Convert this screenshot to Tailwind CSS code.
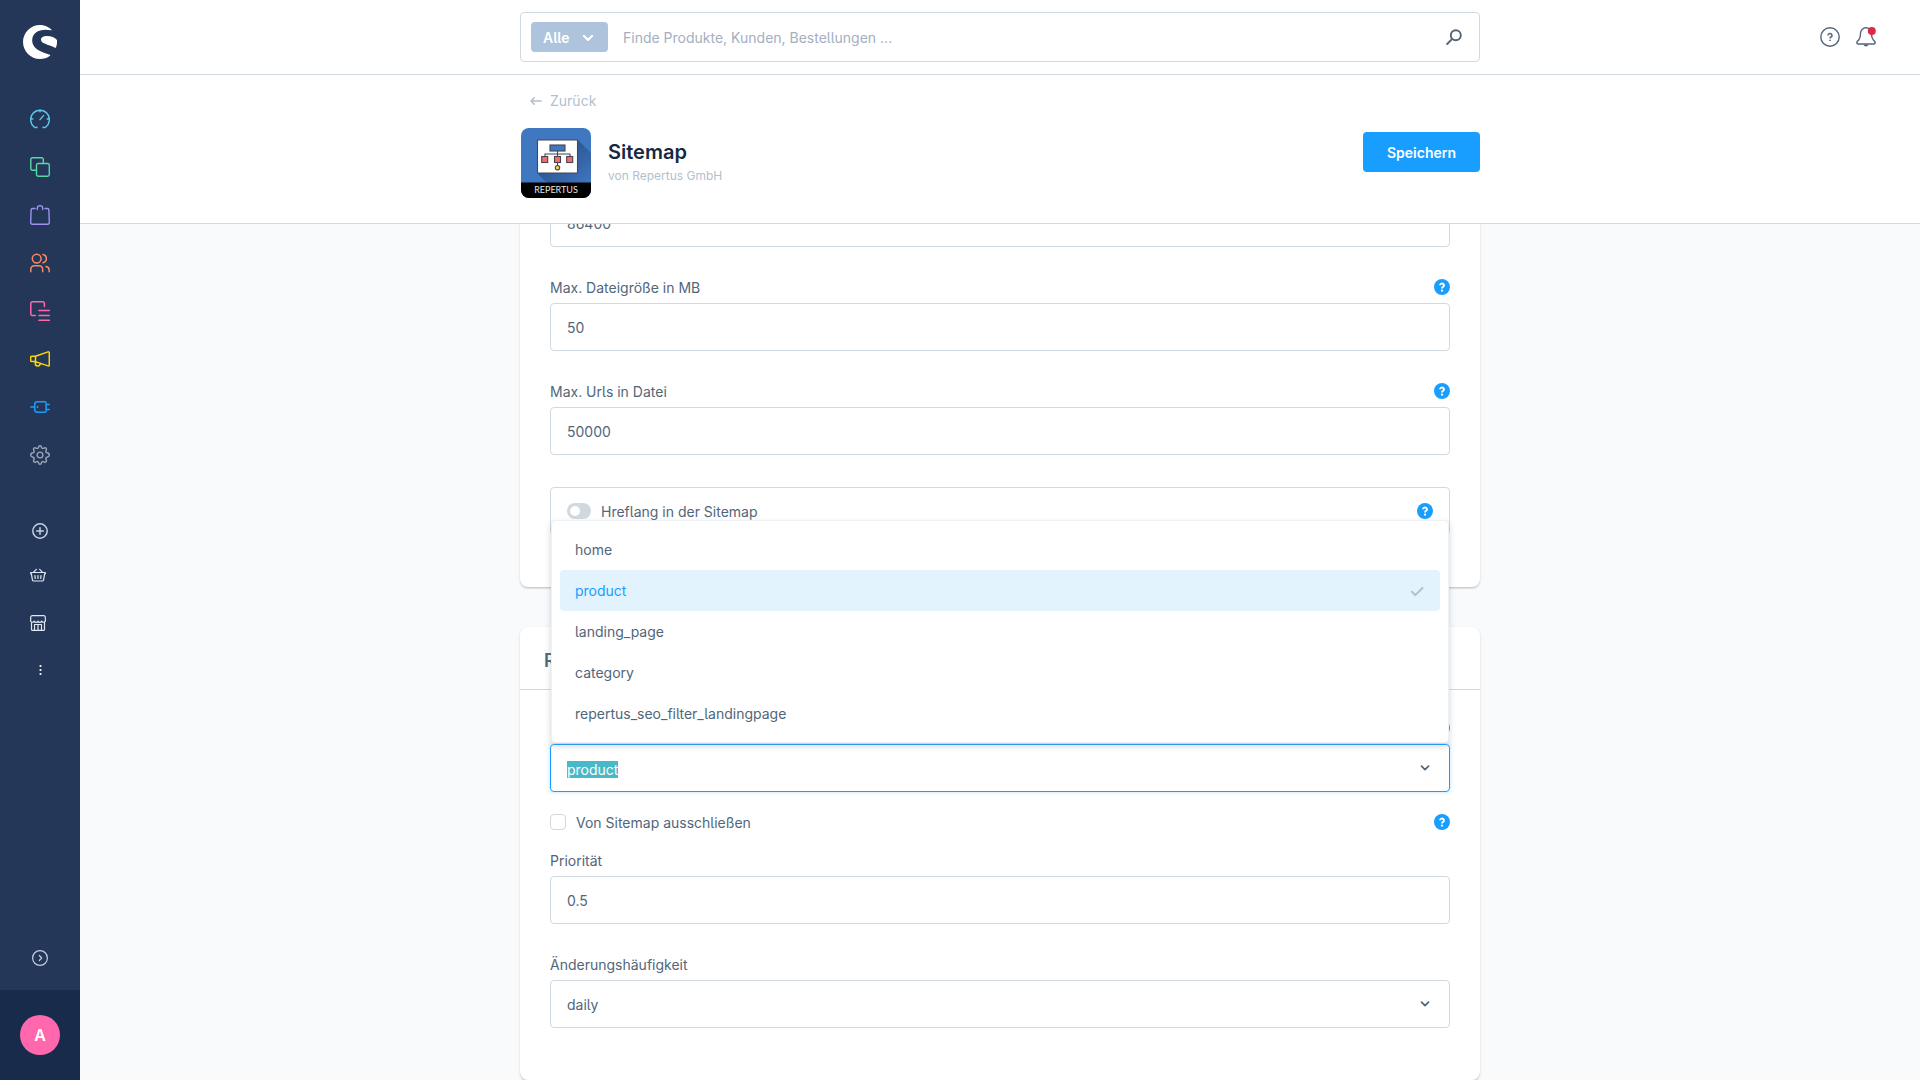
<!DOCTYPE html>
<html lang="de">
<head>
<meta charset="utf-8">
<meta name="viewport" content="width=device-width, initial-scale=1">
<title>Sitemap | Shopware Administration</title>
<script src="https://cdn.jsdelivr.net/npm/@tailwindcss/browser@4"></script>
</head>
<body class="flex h-screen overflow-hidden bg-[#f9fafb] font-['Inter',sans-serif] text-sm text-[#52667a] [font-feature-settings:'cv05']">

<svg class="hidden" aria-hidden="true">
  <symbol id="help" viewBox="0 0 16 16">
    <circle cx="8" cy="8" r="8" fill="#189eff"/>
    <path d="M6 6.300a2 1.800 0 1 1 3 1.600c-.7.400-1 .7-1 1.500" fill="none" stroke="#fff" stroke-width="1.900"/>
    <circle cx="8" cy="11.700" r="1.100" fill="#fff"/>
  </symbol>
  <symbol id="chevron" viewBox="0 0 10 10">
    <path d="M1.500 3.200 5 6.700l3.500-3.500" fill="none" stroke="currentColor" stroke-width="1.700" stroke-linecap="round" stroke-linejoin="round"/>
  </symbol>
</svg>

<!-- Main navigation -->
<aside class="flex w-20 shrink-0 flex-col items-center bg-[#243758]">
  <a href="#" aria-label="Shopware" class="mt-[25px]">
    <svg class="size-[34px]" viewBox="0 0 34 34" fill="#fff">
      <path d="M28.600 4.700C25.500 1.600 21.300 0 17 0 7.600 0 0 7.600 0 17s7.600 17 17 17c3.700 0 7.200-1.200 10-3.300.4-.3.300-.7-.2-.9C19.500 27 9.200 24.600 9.200 15.200 9.200 8.500 15 4.700 22.500 4.700c2 0 3.800.2 5.800.6.5 0 .6-.3.300-.6z"/>
      <path d="M34 14.900c-2.300-2.100-5.700-3.800-10-3.800-3.500 0-6 1.300-6 3.600 0 3.900 6.800 4.300 14.100 8.100.5.2.8.1.9-.3.9-2.300 1.200-5 1-7.600z"/>
    </svg>
  </a>
  <nav class="mt-[50px] flex flex-col gap-7 [&_svg]:size-5" aria-label="Hauptmenü">
    <a href="#" aria-label="Dashboard"><svg viewBox="0 0 20 20" fill="none" stroke="#5cc9e8" stroke-width="1.400" stroke-linecap="round"><path d="M7 18.200c-.9.600-2 .5-2.800-.2a9.400 9.400 0 1 1 11.600 0c-.8.700-1.900.8-2.800.2M10 .8v2M.8 10h2M17.200 10h2M10 10.600l3.500-4"/></svg></a>
    <a href="#" aria-label="Kataloge"><svg viewBox="0 0 20 20" fill="none" stroke="#57d9a3" stroke-width="1.400"><path d="M6 13.300H2.500A1.700 1.700 0 0 1 .8 11.600V2.500A1.700 1.700 0 0 1 2.500.8h9.100a1.700 1.700 0 0 1 1.700 1.700V6"/><rect x="6.500" y="6.500" width="12.800" height="12.800" rx="1.700"/></svg></a>
    <a href="#" aria-label="Bestellungen"><svg viewBox="0 0 20 20" fill="none" stroke="#a092f0" stroke-width="1.400" stroke-linecap="round" stroke-linejoin="round"><path d="M5 3.500H2.600a1.500 1.500 0 0 0-1.500 1.400L.7 17.700a1.500 1.500 0 0 0 1.500 1.600h15.600a1.500 1.500 0 0 0 1.500-1.600l-.4-12.800a1.500 1.500 0 0 0-1.500-1.400H15M7.300 4.500v-1.200a2.700 2.700 0 0 1 5.400 0v1.200"/></svg></a>
    <a href="#" aria-label="Kunden"><svg viewBox="0 0 20 20" fill="none" stroke="#f88962" stroke-width="1.500" stroke-linecap="round"><circle cx="6.700" cy="5.600" r="4.400"/><path d="M.8 18.800v-2.500a3.500 3.500 0 0 1 3.500-3.500H9.200a3.500 3.500 0 0 1 3.500 3.500v2.500M13 1.400a4.300 4.300 0 0 1 0 8.400M16 13.400a3.700 3.700 0 0 1 3.200 3.700v1.700"/></svg></a>
    <a href="#" aria-label="Inhalte"><svg viewBox="0 0 20 20" fill="none" stroke="#ff68ac" stroke-width="1.500" stroke-linecap="round"><path d="M5.300 14.600H2.500a1.700 1.700 0 0 1-1.700-1.700V2.500A1.700 1.700 0 0 1 2.500.8h10.200a1.700 1.700 0 0 1 1.700 1.700V5.500M9 9.400h10.300M9 14.600h10.300M9 19.300h10.300"/></svg></a>
    <a href="#" aria-label="Marketing"><svg viewBox="0 0 20 20" fill="none" stroke="#ffd700" stroke-width="1.500" stroke-linejoin="round"><path d="M5.500 7.200H1.600a.9.900 0 0 0-.9.900v3.600c0 .5.400.9.900.9h3.900M5.500 7.200v5.400L18 16.900a1 1 0 0 0 1.300-.9V3.800a1 1 0 0 0-1.300-.9zM5.300 12.800v1.500a2.400 2.400 0 0 0 4.800.4"/></svg></a>
    <a href="#" aria-label="Erweiterungen"><svg viewBox="0 0 20 20" fill="none" stroke="#189eff" stroke-width="1.500" stroke-linecap="round"><path d="M.7 10H4.700M16.500 7.500h2.800M16.500 12.500h2.800M7.500 9.500v1"/><path d="M7.500 4.700h7.300a1.300 1.300 0 0 1 1.300 1.300v8a1.300 1.300 0 0 1-1.300 1.300H7.500A2.800 2.800 0 0 1 4.700 12.500v-5A2.800 2.800 0 0 1 7.500 4.700z"/></svg></a>
    <a href="#" aria-label="Einstellungen"><svg viewBox="0 0 20 20" fill="none" stroke="#9aa8b5" stroke-width="1.400" stroke-linejoin="round"><circle cx="10" cy="10" r="2.900"/><path d="M8.500 2.300C8.700 1.200 9.100.7 10 .7s1.300.5 1.500 1.600c.3 1.200 1.300 1.600 2.300.9.900-.6 1.600-.7 2.300 0s.6 1.400 0 2.300c-.7 1-.3 2 .9 2.300 1.700.3 2.300 1 2.300 2.200s-.6 1.800-2.300 2.200c-1.200.3-1.600 1.300-.9 2.300.6.9.7 1.600 0 2.300s-1.400.6-2.300 0c-1-.7-2-.3-2.300.9-.2 1.100-.6 1.600-1.500 1.600s-1.300-.5-1.500-1.600c-.3-1.200-1.300-1.600-2.300-.9-.9.600-1.600.7-2.300 0s-.6-1.400 0-2.300c.7-1 .3-2-.9-2.300C1.300 11.800.7 11.200.7 10s.6-1.900 2.300-2.200c1.200-.3 1.600-1.300.9-2.300-.6-.9-.7-1.600 0-2.300s1.400-.6 2.300 0c1 .7 2 .3 2.300-.9z"/></svg></a>
  </nav>
  <div class="mt-[58px] flex flex-col gap-8 [&_svg]:size-4">
    <button type="button" aria-label="Verkaufskanal hinzufügen"><svg viewBox="0 0 16 16" fill="none" stroke="#c0d1e6" stroke-width="1.500" stroke-linecap="round"><circle cx="8" cy="8" r="7.200"/><path d="M8 4.700v6.600M4.700 8h6.600"/></svg></button>
    <a href="#" aria-label="Storefront" class="-mt-1 -ml-0.5"><svg viewBox="0 0 16 16" fill="none" stroke="#e2e8ef" stroke-width="1.200" stroke-linecap="round" stroke-linejoin="round"><path d="M.7 5.500h14.600v1.300h-.7l-1 6a1.500 1.500 0 0 1-1.500 1.200H3.900a1.500 1.500 0 0 1-1.500-1.200l-1-6H.7zM3.500 5.300l2.800-3M12.500 5.300l-2.800-3M5 8.500l.2 3M8 8.500v3M11 8.500l-.2 3"/></svg></a>
    <a href="#" aria-label="Marktplatz" class="-ml-0.5"><svg viewBox="0 0 16 16" fill="none" stroke="#e2e8ef" stroke-width="1.200" stroke-linecap="round" stroke-linejoin="round"><path d="M1.500 7v7.500a.8.800 0 0 0 .8.800h11.400a.8.800 0 0 0 .8-.8V7M2.200.7h11.600a1.500 1.500 0 0 1 1.500 1.500v2.500A1.900 1.900 0 0 1 11.700 6 1.900 1.900 0 0 1 8 6 1.900 1.900 0 0 1 4.300 6 1.900 1.900 0 0 1 .7 4.700V2.200A1.500 1.500 0 0 1 2.200.7zM4.500 15V9.500h7V15M8 9.500V15"/></svg></a>
    <button type="button" aria-label="Mehr"><svg viewBox="0 0 16 16" fill="#fff"><circle cx="8.500" cy="3" r="1.100"/><circle cx="8.500" cy="7" r="1.100"/><circle cx="8.500" cy="11" r="1.100"/></svg></button>
  </div>
  <button type="button" aria-label="Menü ausklappen" class="mt-auto mb-6"><svg class="size-4" viewBox="0 0 16 16" fill="none" stroke="#c0d1e6" stroke-width="1.200" stroke-linecap="round" stroke-linejoin="round"><circle cx="8" cy="8" r="7.400"/><path d="M7.300 5.500 9.700 8l-2.400 2.500"/></svg></button>
  <div class="flex h-[90px] w-full items-center justify-center bg-[#182b4b]">
    <button type="button" class="size-10 rounded-full bg-[#ff68ac] text-base font-semibold text-white">A</button>
  </div>
</aside>

<div class="flex min-w-0 flex-1 flex-col">
  <!-- Search bar -->
  <header class="grid h-[75px] shrink-0 grid-cols-[1fr_minmax(0,960px)_1fr] items-center border-b border-[#d1d9e0] bg-white">
    <div class="col-start-2 flex h-[50px] items-center rounded border border-[#d1d9e0] pr-[17px] pl-[10px]">
      <button type="button" class="flex h-[30px] w-[77px] items-center justify-between rounded bg-[#aec4dc] pt-0.5 pr-[14px] pl-3 font-semibold text-white">Alle<svg class="size-3"><use href="#chevron"/></svg></button>
      <input type="search" aria-label="Suche" placeholder="Finde Produkte, Kunden, Bestellungen ..." class="ml-[15px] min-w-0 flex-1 pt-0.5 outline-none placeholder:text-[#a3b0bf]">
      <svg class="size-4" viewBox="0 0 16 16" fill="none" stroke="#52667a" stroke-width="1.900" stroke-linecap="round"><circle cx="9.800" cy="6.200" r="5"/><path d="M6.200 9.900 1.200 15"/></svg>
    </div>
    <div class="flex justify-end gap-4 pr-11">
      <button type="button" aria-label="Hilfe"><svg class="size-5" viewBox="0 0 20 20" fill="none" stroke="#52667a" stroke-width="1.400"><circle cx="10" cy="10" r="9.200"/><path d="M8 8.400a2 1.900 0 1 1 3 1.600c-.7.400-1 .8-1 1.500" stroke-width="1.600"/><path d="M10 12.700v1.300" stroke-width="1.600"/></svg></button>
      <button type="button" aria-label="Benachrichtigungen"><svg class="size-5" viewBox="0 0 20 20" fill="none" stroke="#52667a" stroke-width="1.400" stroke-linejoin="round"><path d="M10 .8a5.500 5.500 0 0 0-5.500 5.500c0 4-.9 6.200-2.900 7.800-1.200 1-1 2.900.5 2.900h15.800c1.500 0 1.700-1.900.5-2.900-2-1.600-2.900-3.800-2.900-7.800A5.500 5.500 0 0 0 10 .8z"/><path d="M8.300 17.500a1.800 1.800 0 0 0 3.400 0" stroke-width="1.700"/><circle cx="15.800" cy="4" r="4" fill="#de294c" stroke="none"/></svg></button>
    </div>
  </header>

  <!-- Page header -->
  <div class="shrink-0 border-b border-[#d1d9e0] bg-white">
    <div class="mx-auto h-[148px] max-w-[960px] pt-4">
      <a href="#" class="ml-[10px] inline-flex h-5 items-center gap-2 text-[#b3bfcc]"><svg class="size-3" viewBox="0 0 12 12" fill="none" stroke="currentColor" stroke-width="1.500" stroke-linecap="round" stroke-linejoin="round"><path d="M11.200 6H1M4.300 2.700 1 6l3.300 3.300"/></svg>Zurück</a>
      <div class="mt-4 flex items-center">
        <svg class="ml-px size-[70px] rounded-lg" viewBox="0 0 70 70">
          <defs><linearGradient id="shade" x1="0" y1="0" x2="1" y2="1"><stop offset=".35" stop-color="#2c5592"/><stop offset="1" stop-color="#3f77c1"/></linearGradient></defs>
          <rect width="70" height="70" fill="#3f77c1"/>
          <path d="M57 12 70 25V55H26L16 45z" fill="url(#shade)"/>
          <rect x="16.500" y="12" width="40" height="33" rx=".8" fill="#fff" stroke="#45474d" stroke-width="1.100"/>
          <g stroke="#45474d" stroke-width="1.100"><path d="M36.500 23v15M24 28.500V26h25v2.500" fill="none"/><rect x="29" y="17" width="15" height="6" fill="#3f77c1"/><g fill="#f76b6b"><rect x="20.700" y="28.500" width="6" height="6"/><rect x="33.500" y="28.500" width="6" height="6"/><rect x="45.700" y="28.500" width="6" height="6"/></g><circle cx="36.500" cy="39.700" r="2.200" fill="#f6d354"/></g>
          <rect y="54.500" width="70" height="15.500" fill="#000"/>
          <text x="35" y="65" text-anchor="middle" fill="#e4e4e4" font-family="Lato, sans-serif" font-size="9">REPERTUS</text>
        </svg>
        <div class="-mt-1 ml-[17px]">
          <h1 class="text-xl leading-7 font-semibold text-[#142a44]">Sitemap</h1>
          <p class="mt-0.5 text-xs text-[#b3bfcc]">von Repertus GmbH</p>
        </div>
        <button type="button" class="-mt-[22px] ml-auto h-10 w-[117px] rounded bg-[#189eff] pt-0.5 font-semibold text-white">Speichern</button>
      </div>
    </div>
  </div>

  <!-- Plugin configuration; the reversed column starts scrolled to its end -->
  <main class="flex min-h-0 flex-1 flex-col-reverse overflow-y-auto [scrollbar-width:none]">
    <form class="mx-auto flex w-full max-w-[960px] flex-col gap-10">
      <section class="rounded-lg bg-white px-[30px] pt-[30px] pb-[52px] shadow-[0_1px_1px_rgba(0,0,0,.08),0_2px_1px_rgba(0,0,0,.06),0_1px_3px_rgba(0,0,0,.1)]">
        <input aria-label="Aktualisierungszeit" value="86400" class="mb-8 h-12 w-full rounded border border-[#d1d9e0] px-4 outline-none">
        <div class="mb-8">
          <div class="mb-2 flex h-4 items-center justify-between"><label for="size" class="pt-0.5">Max. Dateigröße in MB</label><svg class="size-4"><use href="#help"/></svg></div>
          <input id="size" value="50" class="h-12 w-full rounded border border-[#d1d9e0] px-4 outline-none">
        </div>
        <div class="mb-8">
          <div class="mb-2 flex h-4 items-center justify-between"><label for="urls" class="pt-0.5">Max. Urls in Datei</label><svg class="size-4"><use href="#help"/></svg></div>
          <input id="urls" value="50000" class="h-12 w-full rounded border border-[#d1d9e0] px-4 outline-none">
        </div>
        <div class="flex h-12 items-center rounded border border-[#d1d9e0] px-4">
          <input id="hreflang" type="checkbox" role="switch" class="mr-[10px] flex h-4 w-6 appearance-none items-center rounded-full bg-[#d1d9e0] before:ml-[3px] before:size-[10px] before:rounded-full before:bg-white">
          <label for="hreflang" class="pt-0.5">Hreflang in der Sitemap</label>
          <svg class="ml-auto size-4"><use href="#help"/></svg>
        </div>
      </section>

      <section class="rounded-lg bg-white shadow-[0_1px_1px_rgba(0,0,0,.08),0_2px_1px_rgba(0,0,0,.06),0_1px_3px_rgba(0,0,0,.1)]">
        <h2 class="flex h-[63px] items-center border-b border-[#d1d9e0] px-6 pt-1.5 text-lg font-semibold">Route</h2>
        <div class="px-[30px] pt-[30px] pb-[52px]">
          <div class="mb-2 flex h-4 items-center justify-between"><label for="route" class="pt-0.5">Route</label><svg class="size-4"><use href="#help"/></svg></div>
          <div class="relative mb-[22px] flex h-12 items-center rounded border border-[#189eff] pr-[19px] pl-4 shadow-[0_0_4px_rgba(24,158,255,.3)]">
            <input id="route" role="combobox" aria-expanded="true" aria-controls="routes" value="product" class="min-w-0 flex-1 pt-0.5 leading-[17px] outline-none selection:bg-[#48b9c7] selection:text-white">
            <svg class="size-[10px]"><use href="#chevron"/></svg>
            <ul id="routes" role="listbox" class="absolute inset-x-0 bottom-full mb-[2px] rounded border border-[#eef1f5] bg-white p-2 shadow-[0_3px_6px_rgba(120,138,155,.35)]">
              <li role="option" class="flex h-[41px] items-center rounded px-[15px]">home</li>
              <li role="option" aria-selected="true" class="flex h-[41px] items-center justify-between rounded bg-[#e2f3fe] px-[15px] text-[#189eff]">product<svg class="size-4" viewBox="0 0 16 16" fill="none" stroke="#b3bfcc" stroke-width="2" stroke-linecap="round" stroke-linejoin="round"><path d="m3 8.800 3.300 3.300L13.500 5"/></svg></li>
              <li role="option" class="flex h-[41px] items-center rounded px-[15px]">landing_page</li>
              <li role="option" class="flex h-[41px] items-center rounded px-[15px]">category</li>
              <li role="option" class="flex h-[41px] items-center rounded px-[15px]">repertus_seo_filter_landingpage</li>
            </ul>
          </div>
          <div class="mb-[22px] flex h-4 items-center">
            <input id="exclude" type="checkbox" class="mr-[10px] size-4 appearance-none rounded border border-[#d1d9e0]">
            <label for="exclude" class="pt-0.5">Von Sitemap ausschließen</label>
            <svg class="ml-auto size-4"><use href="#help"/></svg>
          </div>
          <div class="mb-8">
            <div class="mb-2 flex h-4 items-center"><label for="priority" class="pt-0.5">Priorität</label></div>
            <input id="priority" value="0.5" class="h-12 w-full rounded border border-[#d1d9e0] px-4 outline-none">
          </div>
          <div class="mb-2 flex h-4 items-center"><label for="frequency" class="pt-0.5">Änderungshäufigkeit</label></div>
          <div class="relative">
            <select id="frequency" class="h-12 w-full appearance-none rounded border border-[#d1d9e0] px-4 pt-0.5 outline-none"><option>daily</option><option>weekly</option><option>monthly</option></select>
            <svg class="pointer-events-none absolute inset-y-0 right-5 my-auto size-[10px]"><use href="#chevron"/></svg>
          </div>
        </div>
      </section>
    </form>
  </main>
</div>
<script>
  const route = document.getElementById('route');
  route.focus({ preventScroll: true });
  route.select();
</script>
</body>
</html>
